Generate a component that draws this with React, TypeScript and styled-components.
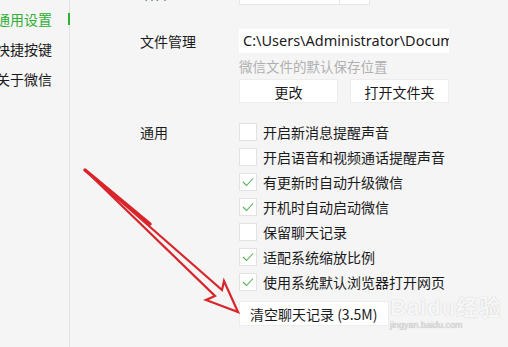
import React, { FC } from 'react';
import styled, { createGlobalStyle } from 'styled-components';

const GlobalStyle = createGlobalStyle`
  html, body {
    margin: 0;
    padding: 0;
    background: #f5f5f5;
  }
  body {
    font-family: "Noto Sans CJK SC", "Noto Sans", "Liberation Sans", sans-serif;
    font-size: 14px;
    color: #1a1a1a;
  }
`;

const Page = styled.div`
  position: relative;
  display: flex;
  width: 508px;
  height: 347px;
  overflow: hidden;
  background: #f5f5f5;
`;

const Sidebar = styled.nav`
  flex: 0 0 70px;
  border-right: 1px solid #e2e2e2;
  padding-top: 4px;
  box-sizing: border-box;
`;

const NavItem = styled.div<{ $active?: boolean }>`
  position: relative;
  height: 30px;
  line-height: 30px;
  margin-left: -4px;
  font-size: 14px;
  white-space: nowrap;
  color: ${p => (p.$active ? '#2fae35' : '#1a1a1a')};

  &::after {
    content: '';
    display: ${p => (p.$active ? 'block' : 'none')};
    position: absolute;
    right: -1px;
    top: 9px;
    width: 2px;
    height: 12px;
    background: #2fae35;
  }
`;

const Main = styled.main`
  flex: 1;
  padding-left: 70px;
  margin-top: -19px;
  display: flex;
  flex-direction: column;
`;

const Row = styled.div<{ $gap?: number }>`
  display: flex;
  align-items: flex-start;
  margin-top: ${p => p.$gap ?? 0}px;
`;

const Label = styled.div`
  flex: 0 0 99px;
  height: 24px;
  line-height: 24px;
  font-size: 14px;
  color: #1a1a1a;
`;

const Controls = styled.div`
  display: flex;
  flex-direction: column;
`;

const Select = styled.div`
  display: flex;
  width: 131px;
  height: 24px;
  background: #fff;
  border: 1px solid #e6e6e6;
  box-sizing: border-box;
`;

const SelectValue = styled.div`
  flex: 1;
  border-right: 1px solid #e6e6e6;
`;

const SelectArrow = styled.div`
  width: 29px;
`;

const PathInput = styled.div`
  width: 210px;
  height: 24px;
  line-height: 23px;
  background: #fff;
  box-sizing: border-box;
  padding-left: 4px;
  font-size: 14.5px;
  overflow: hidden;
  white-space: nowrap;
  color: #1a1a1a;
  font-family: "Noto Sans", "Liberation Sans", sans-serif;
`;

const Hint = styled.div`
  margin-top: 6px;
  height: 14px;
  line-height: 14px;
  font-size: 13.5px;
  color: #b0b0b0;
`;

const ButtonRow = styled.div`
  display: flex;
  gap: 12px;
  margin-top: 6px;
`;

const Button = styled.div<{ $width?: number }>`
  width: ${p => p.$width ?? 99}px;
  height: 24px;
  line-height: 24px;
  background: #fff;
  text-align: center;
  font-size: 14px;
  color: #1a1a1a;
  box-sizing: border-box;
  border: 1px solid #ededed;
`;

const ClearButton = styled(Button)`
  height: 25px;
  line-height: 25px;
  text-align: left;
  padding-left: 10px;
  margin-top: 7px;
`;

const CheckList = styled.div`
  display: flex;
  flex-direction: column;
  margin-top: -1px;
`;

const CheckRow = styled.div`
  display: flex;
  align-items: center;
  height: 25px;
`;

const Box = styled.div`
  width: 18px;
  height: 18px;
  box-sizing: border-box;
  border: 1px solid #e2e2e2;
  background: #fff;
  display: flex;
  align-items: center;
  justify-content: center;
  margin-right: 6px;
`;

const CheckText = styled.span`
  font-size: 14px;
  color: #1a1a1a;
`;

const Overlay = styled.svg`
  position: absolute;
  left: 0;
  top: 0;
  pointer-events: none;
`;

const Watermark = styled.div`
  position: absolute;
  left: 390px;
  top: 296px;
  color: rgba(255, 255, 255, 0.9);
  text-shadow: 0 0 1px rgba(170, 170, 170, 0.8);
  font-family: "Liberation Sans", "Noto Sans CJK SC", sans-serif;
  pointer-events: none;
`;

const WmBig = styled.div`
  font-size: 22px;
  font-weight: bold;
  line-height: 24px;
  letter-spacing: 1px;
`;

const WmSmall = styled.div`
  font-size: 9px;
  line-height: 10px;
  color: rgba(215, 215, 215, 0.8);
`;

const Check: FC = () => (
  <svg width="12" height="10" viewBox="0 0 12 10">
    <path d="M1 5 L4.5 8.5 L11 1.5" fill="none" stroke="#52b355" strokeWidth="1.1" />
  </svg>
);

const options = [
  { text: '开启新消息提醒声音', on: false },
  { text: '开启语音和视频通话提醒声音', on: false },
  { text: '有更新时自动升级微信', on: true },
  { text: '开机时自动启动微信', on: true },
  { text: '保留聊天记录', on: false },
  { text: '适配系统缩放比例', on: true },
  { text: '使用系统默认浏览器打开网页', on: true },
];

export default function App() {
  return (
    <Page>
      <GlobalStyle />
      <Sidebar>
        <NavItem $active>通用设置</NavItem>
        <NavItem>快捷按键</NavItem>
        <NavItem>关于微信</NavItem>
      </Sidebar>
      <Main>
        <Row>
          <Label>语言</Label>
          <Select>
            <SelectValue />
            <SelectArrow />
          </Select>
        </Row>
        <Row $gap={24}>
          <Label>文件管理</Label>
          <Controls>
            <PathInput>C:\Users\Administrator\Documents\WeChat Files</PathInput>
            <Hint>微信文件的默认保存位置</Hint>
            <ButtonRow>
              <Button>更改</Button>
              <Button>打开文件夹</Button>
            </ButtonRow>
          </Controls>
        </Row>
        <Row $gap={17}>
          <Label>通用</Label>
          <Controls>
            <CheckList>
              {options.map(o => (
                <CheckRow key={o.text}>
                  <Box>{o.on && <Check />}</Box>
                  <CheckText>{o.text}</CheckText>
                </CheckRow>
              ))}
            </CheckList>
            <ClearButton $width={150}>清空聊天记录 (3.5M)</ClearButton>
          </Controls>
        </Row>
      </Main>
      <Watermark>
        <WmBig>Baidu经验</WmBig>
        <WmSmall>jingyan.baidu.com</WmSmall>
      </Watermark>
      <Overlay width="508" height="347" viewBox="0 0 508 347">
        <g fill="none" stroke="#d8242b" strokeLinejoin="miter" strokeLinecap="round">
          <path d="M85 170 L150 224" strokeWidth="3.5" />
          <path
            d="M85 170 L222 290 L224 281 L238 312 L206 300 L215 296 Z"
            strokeWidth="2.2"
          />
        </g>
      </Overlay>
    </Page>
  );
}
